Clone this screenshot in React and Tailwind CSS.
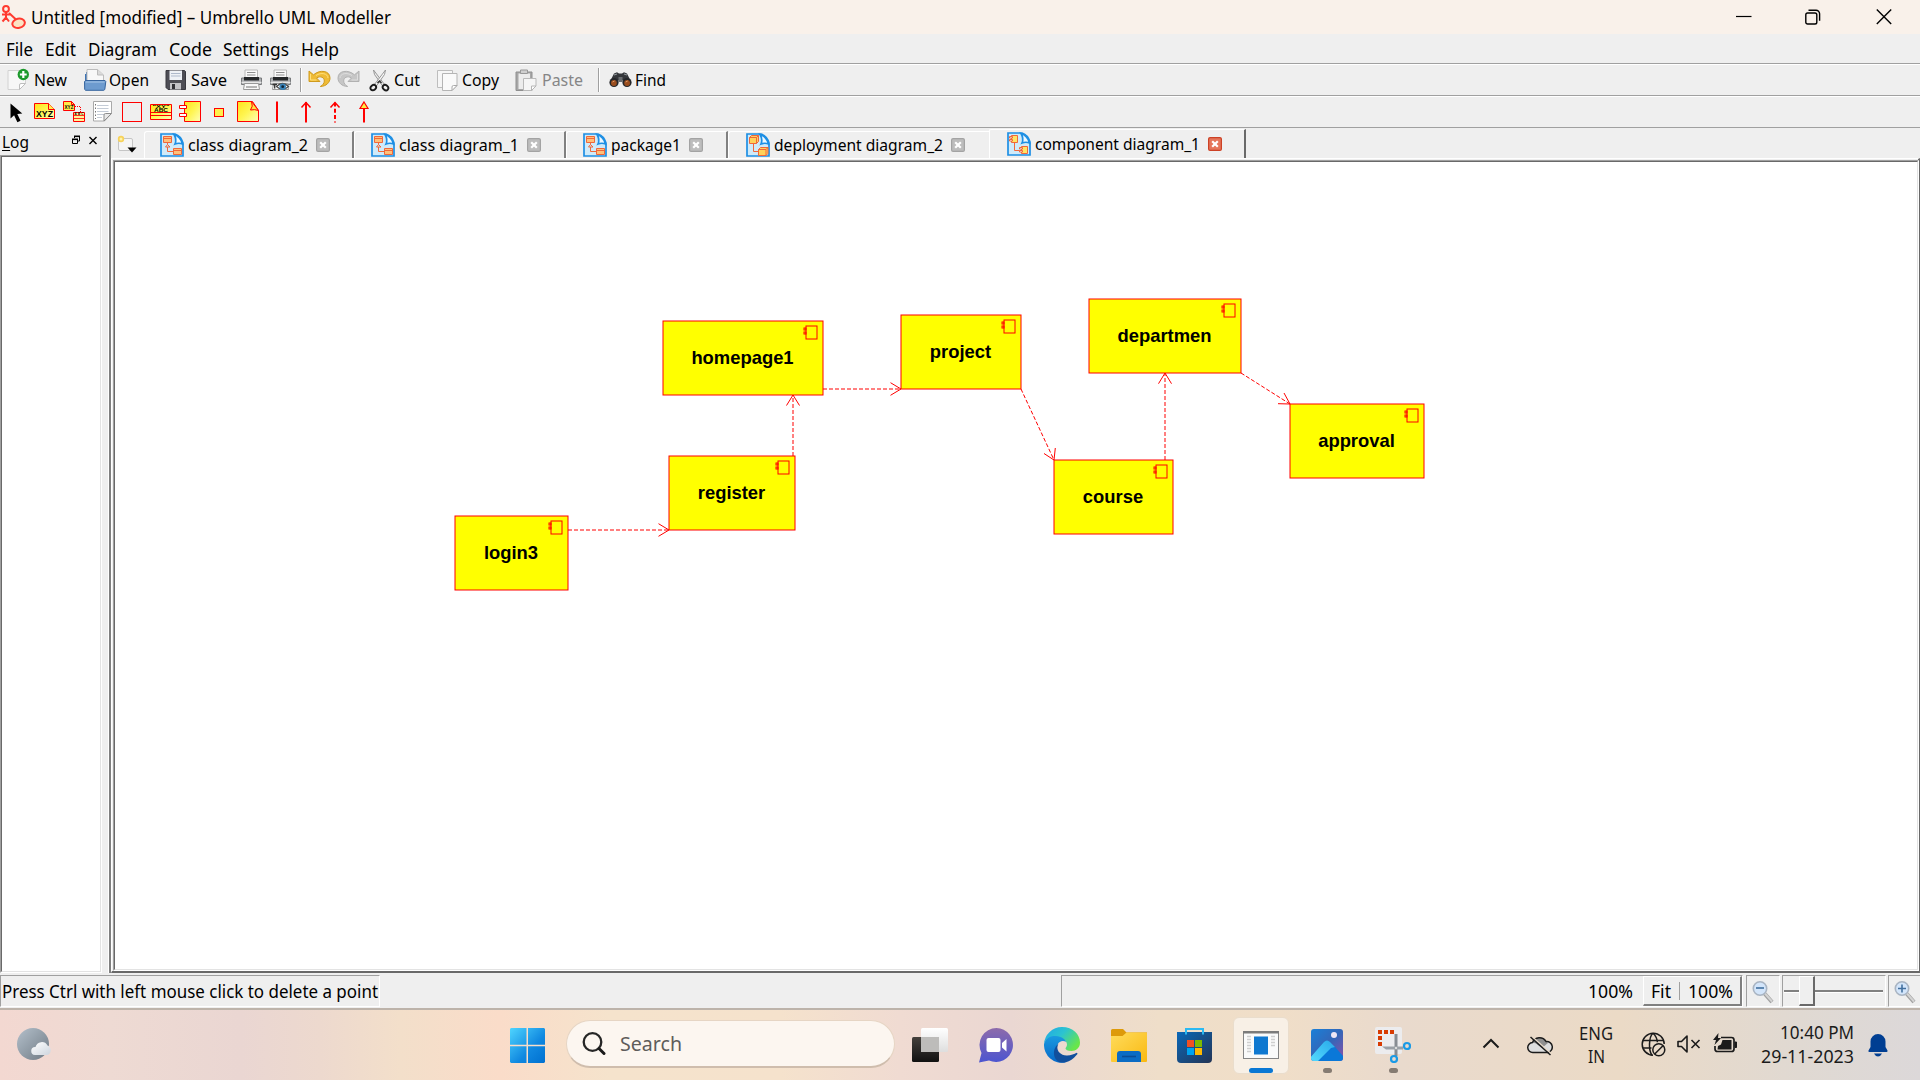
import React, { useLayoutEffect, useRef } from "react";

/* Single-line label whose glyphs are fitted to an exact advance width. */
function Label({ w, className = "", children }) {
  const ref = useRef(null);
  useLayoutEffect(() => {
    const fit = () => {
      const el = ref.current;
      if (!el) return;
      el.style.transform = "none";
      el.style.transform = `scaleX(${w / el.getBoundingClientRect().width})`;
    };
    fit();
    document.fonts?.ready.then(fit);
  }, [w, children]);
  return (
    <span className={"block shrink-0 whitespace-nowrap " + className} style={{ width: w }}>
      <span ref={ref} className="inline-block origin-left">{children}</span>
    </span>
  );
}

function Svg({ w, h, vw = w, vh = h, className = "", children }) {
  return (
    <svg width={w} height={h} viewBox={`0 0 ${vw} ${vh}`} fill="none" className={"block shrink-0 " + className}>
      {children}
    </svg>
  );
}

const AppLogo = () => (
  <Svg w={25} h={25} className="ml-px">
    <g stroke="#ff3b30" strokeWidth="2">
      <circle cx="5" cy="4" r="2.9" fill="#fff2e8" />
      <path d="M5 7v6M1 9.5h9M5 12.500l-3.500 4M5 12.500l3 4M8 8l7 6.500" />
      <ellipse cx="17.6" cy="18.3" rx="6.3" ry="4.6" fill="#fbe3c4" transform="rotate(-12 17.6 18.3)" />
    </g>
  </Svg>
);

function TitleBar() {
  return (
    <header className="flex h-[34px] w-full items-center bg-[#f9f1ea]">
      <AppLogo />
      <Label w={360} className="ml-[5px] text-[18px]">Untitled [modified] – Umbrello UML Modeller</Label>
      <div className="ml-auto mr-7 flex items-center">
        <Svg w={16} h={16}><path d="M0 7.500h15.500" stroke="#000" strokeWidth="1.200" /></Svg>
        <Svg w={16} h={16} className="ml-[53px]">
          <rect x="0.800" y="4" width="11" height="11" rx="1.800" stroke="#000" strokeWidth="1.400" />
          <path d="M3.500 1.200h7.500a3.600 3.600 0 0 1 3.600 3.600v7" stroke="#000" strokeWidth="1.400" />
        </Svg>
        <Svg w={16} h={16} className="ml-[55px]"><path d="M.8 .5l14.400 14.400M15.200 .5L.8 14.900" stroke="#000" strokeWidth="1.400" /></Svg>
      </div>
    </header>
  );
}

function MenuBar() {
  return (
    <nav className="flex h-[30px] w-full items-center border-b border-[#a0a0a0] pl-[6px] text-[18px]">
      <Label w={27}>File</Label>
      <Label w={31} className="ml-3">Edit</Label>
      <Label w={69} className="ml-3">Diagram</Label>
      <Label w={43} className="ml-3">Code</Label>
      <Label w={66} className="ml-[11px]">Settings</Label>
      <Label w={38} className="ml-3">Help</Label>
    </nav>
  );
}

const NewIcon = () => (
  <Svg w={24} h={24}>
    <path d="M1 2.500h17.500v13l-6 6H1z" fill="#f7f7f7" stroke="#d2d2d2" />
    <path d="M18.500 15.500h-4.500q-1.500 0-1.500 1.500v4.500z" fill="#fff" stroke="#bdbdbd" />
    <circle cx="16.300" cy="6.500" r="5.700" fill="#1d9a2c" />
    <path d="M16.300 3.100v6.800M12.900 6.500h6.800" stroke="#fff" strokeWidth="2.200" />
  </Svg>
);
const OpenIcon = () => (
  <Svg w={24} h={24}>
    <path d="M3 7V4h6v3" fill="#4578b4" />
    <path d="M2 6h4v8H2z" fill="#3f73b2" />
    <path d="M4 13V1.500h10.500L20.500 7v6z" fill="#f8f8f8" stroke="#bcbcbc" />
    <path d="M14.500 1.500v5.500h6" fill="#dadada" stroke="#bcbcbc" />
    <path d="M1.500 13.500l1.500-1h19l.8 1-1 8-1 .8H2.500l-.8-.8z" fill="#6d9bcf" stroke="#36659f" />
    <path d="M2.500 14h19" stroke="#a9c7e8" />
  </Svg>
);
const SaveIcon = () => (
  <Svg w={22} h={22}>
    <path d="M1 1.500h18.500l1 1V20.500H3L1 18.500z" fill="#4d4d55" stroke="#38383f" />
    <path d="M4.500 1.500h12.500v9.500H4.500z" fill="#eef1f6" />
    <path d="M6 4.500h9.500M6 7h9.500" stroke="#aeb9cb" />
    <path d="M5 14h11v6.500H5z" fill="#c3c3c8" />
    <path d="M7 15h3v5H7z" fill="#303036" />
  </Svg>
);
const PrintIcon = ({ preview }) => (
  <Svg w={23} h={24}>
    <path d="M5 2h12.500v8H5z" fill="#fafafa" stroke="#b8b8b8" />
    <path d="M7 4.500h8.500M7 7h8.500" stroke="#8e8e8e" />
    <path d="M1.500 10h20v6.500h-20z" fill="#aeb0b3" stroke="#77797b" />
    <path d="M4 9h15v3.500H4z" fill="#26282a" />
    <path d="M1.500 14.500h20" stroke="#e7e7e7" strokeWidth="1.500" />
    <path d="M4.500 15.500h14l1 6h-16z" fill="#f8f8f8" stroke="#999" />
    {preview ? (
      <g>
        <path d="M3.500 16.500h4.500M5.700 16.500v4" stroke="#333" strokeWidth="1.300" />
        <path d="M7.500 18.500q6-6 12 0q-6 5.500-12 0z" fill="#fff" stroke="#4a4a4a" strokeWidth="1.200" />
        <circle cx="13.700" cy="18.700" r="3.300" fill="#3a83b8" />
        <circle cx="13.700" cy="18.700" r="1.400" fill="#123" />
      </g>
    ) : <path d="M6 19h11" stroke="#b5b5b5" strokeWidth="2" />}
  </Svg>
);
const TurnIcon = ({ redo }) => (
  <Svg w={23} h={20} className={redo ? "-scale-x-100" : ""}>
    <path
      d="M1 2v10.500h11L8.500 9c4-2.600 8-.4 7.800 3 0 2.400-1.800 4.300-4 5.500 6-.2 9.700-4 9.700-8.500C22 1.500 12 .2 5.500 5.800z"
      fill={redo ? "#c6c6c6" : "#efbb36"} stroke={redo ? "#b1b1b1" : "#cf9a1c"}
    />
    <path d="M2.500 5v6h6M8 6.500c5-3.500 12-2 12 2.500" stroke={redo ? "#dedede" : "#ffe07a"} />
  </Svg>
);
const CutIcon = () => (
  <Svg w={22} h={23}>
    <path d="M4.500 1l1 4.500 8.500 12 1.800-1.700z" fill="#e9e9e9" stroke="#8f8f8f" strokeWidth=".9" />
    <path d="M16.500 1l-1 4.500-8.500 12-1.800-1.700z" fill="#f7f7f7" stroke="#8f8f8f" strokeWidth=".9" />
    <ellipse cx="4.300" cy="18.600" rx="3" ry="2.400" transform="rotate(-40 4.300 18.600)" stroke="#1c1c1c" strokeWidth="1.900" />
    <ellipse cx="16.500" cy="18.600" rx="3" ry="2.400" transform="rotate(40 16.500 18.600)" stroke="#1c1c1c" strokeWidth="1.900" />
    <path d="M8.500 14l2-2 2 2" stroke="#333" strokeWidth="1.500" />
  </Svg>
);
const CopyIcon = () => (
  <Svg w={21} h={23}>
    <path d="M.5 1.500h15v17H.5z" fill="#f6f6f6" stroke="#bdbdbd" />
    <path d="M5.500 4.500h14.500v12l-5 5H5.500z" fill="#fafafa" stroke="#b5b5b5" />
    <path d="M20 16.500h-3.500q-1.500 0-1.500 1.500v3.500z" fill="#fff" stroke="#aaa" />
  </Svg>
);
const PasteIcon = () => (
  <Svg w={23} h={23}>
    <path d="M1 3h16v18.500H1z" fill="#a7a7a7" stroke="#8f8f8f" />
    <path d="M3.500 4.500h11.500V20H3.500z" fill="#ececec" />
    <path d="M5.500 1h7v3.500h-7z" fill="#cfcfcf" stroke="#999" />
    <path d="M8.500 9.500h12.500v7.500l-4.500 4.500h-8z" fill="#f5f5f5" stroke="#b9b9b9" />
    <path d="M21 17h-4.500v4.500z" fill="#fff" stroke="#b5b5b5" />
  </Svg>
);
const FindIcon = () => (
  <Svg w={23} h={16}>
    <path d="M5 1.500l3-1.200 2 1.200h3l2-1.200 3 1.200 3.500 7H1.500z" fill="#34363a" />
    <path d="M9.500 5h4v5h-4z" fill="#6a6d70" />
    <path d="M5 3l3-1M15 2l3 1" stroke="#90969a" strokeWidth="1.300" />
    <circle cx="5" cy="10.500" r="4.600" fill="#25272a" />
    <circle cx="18" cy="10.500" r="4.600" fill="#25272a" />
    <circle cx="4.900" cy="11" r="2.900" fill="#9a4d1e" />
    <circle cx="18.100" cy="11" r="2.900" fill="#9a4d1e" />
    <path d="M3.500 10l2-1M16.700 10l2-1" stroke="#e09a65" />
  </Svg>
);

const ToolBarLine = () => <i className="block h-6 w-0.5 shrink-0 border-l border-[#a0a0a0] bg-white" />;

function MainBar() {
  return (
    <div className="flex h-8 w-full items-center border-y border-b-[#a0a0a0] border-t-white pl-[7px] text-[16.500px]">
      <NewIcon />
      <Label w={33} className="ml-[3px]">New</Label>
      <div className="ml-4"><OpenIcon /></div>
      <Label w={40} className="ml-[2px]">Open</Label>
      <div className="ml-[16px]"><SaveIcon /></div>
      <Label w={36} className="ml-[4px]">Save</Label>
      <div className="ml-[13px]"><PrintIcon /></div>
      <div className="ml-[6px]"><PrintIcon preview /></div>
      <div className="ml-[8px]"><ToolBarLine /></div>
      <div className="-mt-[3px] ml-[6px]"><TurnIcon /></div>
      <div className="-mt-[3px] ml-[6px]"><TurnIcon redo /></div>
      <div className="ml-[9px]"><CutIcon /></div>
      <Label w={26} className="ml-[3px]">Cut</Label>
      <div className="ml-[17px]"><CopyIcon /></div>
      <Label w={37} className="ml-[4px]">Copy</Label>
      <div className="ml-[16px]"><PasteIcon /></div>
      <Label w={41} className="ml-[4px] text-[#868686]">Paste</Label>
      <div className="ml-[15px]"><ToolBarLine /></div>
      <div className="ml-[9px]"><FindIcon /></div>
      <Label w={31} className="ml-[3px]">Find</Label>
    </div>
  );
}

const RED = "#ff0000";
function YellowFade({ id }) {
  return (
    <linearGradient id={id} x1="0" y1="0" x2="1" y2="1">
      <stop offset="0" stopColor="#ffe21a" />
      <stop offset=".5" stopColor="#fff552" />
      <stop offset="1" stopColor="#ffffb8" />
    </linearGradient>
  );
}

/* Diagram tools: 24px cells placed on a 29px pitch. */
function ToolPalette() {
  return (
    <div className="flex h-8 w-full items-center gap-[5px] border-y border-b-[#a0a0a0] border-t-white pl-1">
      <Svg w={24} h={24}>
        <path d="M6.500 3.500v15l3.600-3.200 3.300 7 3.200-1.500-3.300-6.800 5-.6z" fill="#000" />
      </Svg>
      <Svg w={24} h={24}>
        <defs><YellowFade id="y1" /></defs>
        <path d="M1.500 3.500h14l6 6v9h-20z" fill="url(#y1)" stroke={RED} />
        <path d="M15.500 3.500v6h6" fill="#ffee55" stroke={RED} />
        <text x="3" y="16.500" textLength="17" lengthAdjust="spacingAndGlyphs" className="fill-black font-['Liberation_Sans'] text-[8.500px] font-bold">XYZ</text>
      </Svg>
      <Svg w={24} h={24}>
        <path d="M1.500 1.500h8l3 3v6h-11z" fill="#ffe94a" stroke={RED} />
        <path d="M9.500 1.500v3h3" stroke={RED} />
        <text x="2.500" y="8.500" textLength="9" lengthAdjust="spacingAndGlyphs" className="fill-black font-['Liberation_Sans'] text-[4.500px] font-bold">XYZ</text>
        <path d="M13 6.500h5.500V12" stroke={RED} strokeDasharray="1 1" />
        <path d="M11.500 12.500h11v9h-11z" fill="#fff39a" stroke={RED} />
        <path d="M11.500 15.500h11M11.500 18.500h11" stroke={RED} strokeWidth=".8" />
        <text x="12.500" y="15" textLength="9" className="fill-black font-['Liberation_Sans'] text-[3px] font-bold">ABC</text>
      </Svg>
      <Svg w={24} h={24}>
        <path d="M2.500 1.500h18v12l-7 7.500h-11z" fill="#fff" stroke="#a9a9a9" />
        <path d="M6 5.500h11.500M6 8.500h11.500M6 11.500h11.500M6 14.500h7M6 17.500h5" stroke="#c3cbd6" />
        <path d="M4.500 4v15" stroke="#777" strokeDasharray="1.500 2" />
        <path d="M20.500 13.500h-6q-1.500 0-1.500 1.500v6z" fill="#e9e9e9" stroke="#8d8d8d" />
      </Svg>
      <Svg w={24} h={24}><rect x="2.500" y="2.500" width="19" height="19" stroke={RED} /></Svg>
      <Svg w={24} h={24}>
        <defs><YellowFade id="y2" /></defs>
        <path d="M1.500 4.500h21v15h-21z" fill="url(#y2)" stroke={RED} />
        <path d="M1.500 12.500h21M1.500 15.500h21" stroke={RED} />
        <text x="3.500" y="7.700" textLength="17" lengthAdjust="spacingAndGlyphs" className="fill-black font-['Liberation_Sans'] text-[3.500px] font-bold">"XY"</text>
        <text x="5" y="11.500" textLength="14" lengthAdjust="spacingAndGlyphs" className="fill-black font-['Liberation_Sans'] text-[5.500px] font-bold">ABC</text>
      </Svg>
      <Svg w={24} h={24}>
        <defs><YellowFade id="y3" /></defs>
        <path d="M6.500 1.500h16v20h-16z" fill="url(#y3)" stroke={RED} />
        <path d="M1.500 5.500h7v3h-7zM1.500 13.500h7v3h-7z" fill="#fff" stroke={RED} />
      </Svg>
      <Svg w={24} h={24}><rect x="7.500" y="8.500" width="9" height="8" fill="#fff04c" stroke={RED} /></Svg>
      <Svg w={24} h={24}>
        <defs><YellowFade id="y4" /></defs>
        <path d="M1.500 1.500h15l6 9v11h-21z" fill="url(#y4)" stroke={RED} />
        <path d="M15.500 1.500q2 5-1 8.500 4-1 8 .5z" fill="#ffe640" stroke={RED} />
      </Svg>
      <Svg w={24} h={24}><path d="M12 1.500v21" stroke={RED} strokeWidth="2" /></Svg>
      <Svg w={24} h={24}><path d="M12 2v20.500" stroke={RED} strokeWidth="2" /><path d="M7.500 7.500L12 2.500l4.500 5" stroke={RED} strokeWidth="1.500" /></Svg>
      <Svg w={24} h={24}>
        <path d="M12 2.500v20" stroke={RED} strokeWidth="2" strokeDasharray="4 2.300" />
        <path d="M7.500 7.500L12 2.500l4.500 5" stroke={RED} strokeWidth="1.500" />
      </Svg>
      <Svg w={24} h={24}>
        <path d="M12 8.500v14" stroke={RED} strokeWidth="2" />
        <path d="M12 2l4 6.500H8z" fill="#ffee44" stroke={RED} strokeWidth="1.200" />
      </Svg>
    </div>
  );
}

function LogPanel() {
  return (
    <aside className="flex w-[102px] shrink-0 flex-col">
      <div className="flex h-[27px] items-center pl-[2px] pt-px text-[16.500px]">
        <Label w={27}><span className="underline decoration-1 underline-offset-2">L</span>og</Label>
        <Svg w={10} h={10} className="-mt-1 ml-[42px]">
          <path d="M3.500 3V1.500h5v4.500H7" stroke="#000" /><path d="M3 1.300h6" stroke="#000" strokeWidth="1.600" />
          <path d="M1.500 4.500h5v4h-5z" stroke="#000" /><path d="M1 4.300h6" stroke="#000" strokeWidth="1.600" />
        </Svg>
        <Svg w={9} h={9} className="-mt-1 ml-2"><path d="M.5 1l7 7M7.500 1l-7 7" stroke="#000" strokeWidth="1.400" /></Svg>
      </div>
      <div className="flex flex-1 border border-b-white border-l-[#a0a0a0] border-r-white border-t-[#a0a0a0]">
        <div className="flex-1 border border-b-[#e3e3e3] border-l-[#696969] border-r-[#e3e3e3] border-t-[#696969] bg-white" />
      </div>
    </aside>
  );
}

/* Blue document page with one of three diagram miniatures on it. */
function DiagramIcon({ kind }) {
  const cell = {
    class: (
      <g fill="#ffc07a" stroke="#f0673a">
        <path d="M3.500 3.500h8v6h-8zM13.500 15.500h8v6h-8z" />
        <path d="M3.500 5.500h8M13.500 17.500h8M7.500 9.500v2l-2 2.500h4.500l-2.500-2.500M7.500 14v4.500h6" fill="none" />
      </g>
    ),
    deployment: (
      <g fill="#ffd25a" stroke="#f0673a">
        <path d="M3.500 4.500l2-2h7v6l-2 2h-7zM12.500 16.500l2-2h7.500v6l-2 2h-7.500z" />
        <path d="M3.500 4.500h7v6M10.500 4.500l2-2M12.500 16.500h7.500v6M20 16.500l2-2M7.500 10.500v8h5" fill="none" />
      </g>
    ),
    component: (
      <g fill="#ffe466" stroke="#f0673a">
        <path d="M4.500 3.500h6v7h-6zM14.500 14.500h6v7h-6z" />
        <path d="M2.500 4.500h3v1.500h-3zM2.500 7.500h3V9h-3zM12.500 15.500h3V17h-3zM12.500 18.500h3V20h-3z" fill="#fff" />
        <path d="M7.500 10.500v8h5" fill="none" />
      </g>
    ),
  }[kind];
  return (
    <Svg w={24} h={24}>
      <path d="M1 1h14q6 2 8 9v13H1z" fill="#cfeaf9" stroke="#1e8fe4" strokeWidth="1.700" />
      <path d="M14 1.500q3 5 1 9.500 4-1.500 7.500 0Q20.500 3.500 14 1.500z" fill="#eef9ff" stroke="#1e8fe4" strokeWidth="1.700" />
      {cell}
    </Svg>
  );
}

function CloseBox({ active }) {
  return (
    <Svg w={14} h={14}>
      <rect x=".6" y=".6" width="12.800" height="12.800" rx="1.500" fill={active ? "#e5755a" : "#bdbdbd"} stroke={active ? "#cc4125" : "#a3a3a3"} strokeWidth="1.200" />
      <path d="M4.200 4.200l5.600 5.600M9.800 4.200L4.200 9.800" stroke="#fff" strokeWidth="2.200" />
    </Svg>
  );
}

const tabs = [
  { name: "class diagram_2", kind: "class", w: 120, tab: "w-[210px] pl-[15px]" },
  { name: "class diagram_1", kind: "class", w: 120, tab: "w-[212px] pl-[16px]" },
  { name: "package1", kind: "class", w: 70, tab: "w-[162px] pl-[16px]" },
  { name: "deployment diagram_2", kind: "deployment", w: 169, tab: "w-[261px] pl-[17px]" },
  { name: "component diagram_1", kind: "component", w: 165, tab: "w-[257px] pl-[17px]" },
];

function TabBar() {
  return (
    <div className="flex h-[30px] items-end pl-[6px] text-[16.500px]">
      <Svg w={20} h={18} className="mb-[5px]">
        <rect x="1.500" y="3.500" width="14" height="12" rx="1.500" fill="#f5f5f5" stroke="#c5c5c5" />
        <circle cx="4" cy="4" r="3.200" fill="#f7d25a" />
        <circle cx="4" cy="4" r="1.500" fill="#fff3a8" />
        <path d="M10.500 12.500h9l-4.500 5z" fill="#000" />
      </Svg>
      <div className="ml-[7px] flex items-end">
        {tabs.map((t, i) => {
          const active = i === 4;
          return (
            <div
              key={t.name}
              className={
                "flex shrink-0 items-center border-l border-t border-white " + t.tab + " " +
                (active ? "h-[29px] rounded-tl-[2px] border-r-2 border-r-[#696969]" : "h-[27px] rounded-tl-[3px] " + (i < 3 ? "border-r-2 border-r-[#808080]" : ""))
              }
            >
              <DiagramIcon kind={t.kind} />
              <Label w={t.w} className="ml-1">{t.name}</Label>
              <div className="ml-[8px]"><CloseBox active={active} /></div>
            </div>
          );
        })}
      </div>
    </div>
  );
}

const boxes = [
  { name: "login3", x: 455, y: 516, w: 113 },
  { name: "register", x: 669, y: 456, w: 126 },
  { name: "homepage1", x: 663, y: 321, w: 160 },
  { name: "project", x: 901, y: 315, w: 120 },
  { name: "departmen", x: 1089, y: 299, w: 152 },
  { name: "course", x: 1054, y: 460, w: 119 },
  { name: "approval", x: 1290, y: 404, w: 134 },
];

const links = [
  { line: "M568 530H669", head: "M658.500 523.700L669 530L658.500 536.300" },
  { line: "M793 456V395", head: "M786.500 405.500L793 395L799.500 405.500" },
  { line: "M823 389H901", head: "M890.500 382.700L901 389L890.500 395.300" },
  { line: "M1021 389L1054 460", head: "M1044 453.500L1054 460L1055.300 448" },
  { line: "M1165 460V373", head: "M1158.500 383.700L1165 373L1171.500 383.700" },
  { line: "M1241 373L1290 404", head: "M1284 393L1290 404L1278 403.700" },
];

/* Diagram scene; its view box starts at the canvas's own window offset. */
function Diagram() {
  return (
    <svg width="1802" height="807" viewBox="115 162 1802 807" className="block">
      {boxes.map((b) => (
        <g key={b.name} stroke={RED}>
          <rect x={b.x} y={b.y} width={b.w} height="74" fill="#ffff00" />
          <rect x={b.x + b.w - 17} y={b.y + 5} width="11" height="13" fill="none" />
          <rect x={b.x + b.w - 19} y={b.y + 7} width="2" height="2" fill="none" />
          <rect x={b.x + b.w - 19} y={b.y + 11} width="2" height="2" fill="none" />
          <text x={b.x + b.w / 2 - 0.5} y={b.y + 43} textAnchor="middle" stroke="none" className="fill-black font-['Liberation_Sans',Arial,sans-serif] text-[18.400px] font-bold">
            {b.name}
          </text>
        </g>
      ))}
      {links.map((l) => (
        <g key={l.line} stroke={RED} fill="none">
          <path d={l.line} strokeDasharray="4 2" />
          <path d={l.head} />
        </g>
      ))}
    </svg>
  );
}

function Workspace() {
  return (
    <main className="ml-[6px] flex w-[1812px] shrink-0 flex-col border-l border-white">
      <div className="flex flex-1 flex-col border-l-2 border-[#808080]">
        <TabBar />
        <div className="flex flex-1 border-b-2 border-l border-r-2 border-t border-b-[#696969] border-l-white border-r-[#696969] border-t-white pl-px pt-px">
          <div className="flex-1 border border-b-[#fff] border-l-[#a0a0a0] border-r-white border-t-[#a0a0a0]">
            <div className="h-full overflow-hidden border border-b-[#e3e3e3] border-l-[#696969] border-r-[#e3e3e3] border-t-[#696969] bg-white">
              <Diagram />
            </div>
          </div>
        </div>
      </div>
    </main>
  );
}

const Magnifier = ({ plus }) => (
  <Svg w={22} h={24}>
    <path d="M12.500 13.500l7.500 8.500" stroke="#a0a0a0" strokeWidth="4" />
    <path d="M12.500 13l7.500 8.500" stroke="#d4d4d4" strokeWidth="2" />
    <circle cx="8" cy="8.500" r="6.700" fill="#d3e5fa" stroke="#a9b4c2" strokeWidth="1.600" />
    <path d={plus ? "M4 8.500h8M8 4.500v8" : "M4 8h8"} stroke="#42709f" strokeWidth="1.600" />
  </Svg>
);

const sunken = "border border-b-white border-l-[#a0a0a0] border-r-white border-t-[#a0a0a0]";

function StatusBar() {
  return (
    <footer className="flex h-[35px] w-full items-start pt-[2px] text-[18px]">
      <div className={"flex h-8 w-[380px] items-center pl-px " + sunken}>
        <Label w={376}>Press Ctrl with left mouse click to delete a point</Label>
      </div>
      <div className={"ml-auto flex h-8 w-[682px] items-center justify-end " + sunken}>
        <Label w={45}>100%</Label>
        <div className="ml-[10px] flex h-[30px] w-[99px] items-center border border-b-2 border-r-2 border-b-[#808080] border-l-white border-r-[#808080] border-t-white pl-[7px]">
          <Label w={20}>Fit</Label>
          <i className="ml-[8px] block h-[18px] w-px bg-[#a0a0a0]" />
          <Label w={45} className="ml-[8px]">100%</Label>
        </div>
      </div>
      <div className={"ml-[3px] flex h-8 w-[34px] items-center pl-[5px] pt-px " + sunken}><Magnifier /></div>
      <div className={"ml-[2px] flex h-8 w-[104px] items-center pl-px " + sunken}>
        <i className="block h-[3px] w-[15px] border-b border-t-2 border-b-white border-t-[#808080]" />
        <i className="block h-[30px] w-4 border border-b-2 border-r-2 border-b-[#696969] border-l-white border-r-[#696969] border-t-white" />
        <i className="block h-[3px] w-[68px] border-b border-t-2 border-b-white border-t-[#808080]" />
      </div>
      <div className="ml-[2px] flex h-8 w-[32px] items-center border-y border-l border-b-white border-l-[#a0a0a0] border-t-[#a0a0a0] pl-[5px] pt-px"><Magnifier plus /></div>
    </footer>
  );
}

const Weather = () => (
  <Svg w={36} h={34}>
    <defs>
      <linearGradient id="moon" x1="0" y1="0" x2="1" y2="1"><stop stopColor="#b4c0cb" /><stop offset="1" stopColor="#6f7a84" /></linearGradient>
      <linearGradient id="cld" x1="0" y1="0" x2="1" y2="1"><stop stopColor="#fff" /><stop offset="1" stopColor="#cdd5de" /></linearGradient>
    </defs>
    <circle cx="16" cy="17" r="16" fill="url(#moon)" />
    <path d="M18 28a4 4 0 0 1 .5-8 6.500 6.500 0 0 1 12-1.500A5 5 0 0 1 30 28z" fill="url(#cld)" />
  </Svg>
);

const StartIcon = () => (
  <Svg w={35} h={35}>
    <defs><linearGradient id="win" x1="0" y1="0" x2="35" y2="35" gradientUnits="userSpaceOnUse"><stop stopColor="#4fd5ff" /><stop offset=".6" stopColor="#1088e0" /><stop offset="1" stopColor="#0070d0" /></linearGradient></defs>
    <path d="M1 0h15.500v16.800H0V1zM18 0h16l1 1v15.800H18zM0 18.200h16.500V35H1l-1-1zM18 18.200h17V34l-1 1H18z" fill="url(#win)" />
  </Svg>
);
const TaskViewIcon = () => (
  <Svg w={36} h={34}>
    <defs>
      <linearGradient id="tv" x1="0" y1="0" x2="0" y2="1"><stop stopColor="#44403c" /><stop offset="1" stopColor="#111" /></linearGradient>
      <linearGradient id="tw" x1="0" y1="0" x2="0" y2="1"><stop stopColor="#fff" /><stop offset="1" stopColor="#dedede" /></linearGradient>
    </defs>
    <rect x="0" y="9" width="27" height="25" rx="1.500" fill="url(#tv)" />
    <rect x="9" y="0" width="27" height="24" rx="1.500" fill="url(#tw)" />
    <rect x="9" y="9" width="18" height="15" fill="#bdbcba" />
  </Svg>
);
const ChatIcon = () => (
  <Svg w={35} h={35}>
    <defs><linearGradient id="chat" x1="0" y1="0" x2="0" y2="1"><stop stopColor="#8d6bab" /><stop offset="1" stopColor="#4c55d0" /></linearGradient></defs>
    <path d="M17.500 0A17 17 0 1 1 10 32.500L0 34.500 2.500 25A17 17 0 0 1 17.500 0z" fill="url(#chat)" />
    <rect x="7.500" y="10" width="14" height="14" rx="2" fill="#fff" />
    <path d="M23 15l4.500-4v12.500L23 19.500z" fill="#fff" />
  </Svg>
);
const EdgeIcon = () => (
  <Svg w={36} h={36}>
    <defs>
      <linearGradient id="e1" x1="0" y1="0" x2="1" y2=".6"><stop stopColor="#1fa6e8" /><stop offset=".5" stopColor="#2cc3d0" /><stop offset="1" stopColor="#68e64a" /></linearGradient>
      <linearGradient id="e2" x1="0" y1="0" x2="0" y2="1"><stop stopColor="#1a9ae0" /><stop offset="1" stopColor="#0668c8" /></linearGradient>
    </defs>
    <path d="M0 17A18 18 0 0 1 18 0c11 0 18 7.500 18 15.500 0 5.500-4 8.500-8.500 8.500-4 0-6-1.500-6-2.500s1.500-1.500 1.500-4c0-3-3-5.500-7.500-7C9 8.500 2 11 0 17z" fill="url(#e1)" />
    <path d="M0 17C1.500 11 7 8.500 12 9c5 .5 9.500 3 10 6-2-1.500-7-1.500-8.500 3-2 6 1.500 12 6 14l2 3.500A18 18 0 0 1 0 17z" fill="url(#e2)" />
    <path d="M14.500 16.500c-3 5 0 11.500 8 12 4 .2 8-1.500 10-2.800l1.200 1-3.700 4c-4 4-9 5.500-14 4.500-6-2-8-10-4-16z" fill="#114f9c" />
  </Svg>
);
const FolderIcon = () => (
  <Svg w={36} h={33}>
    <defs><linearGradient id="fd" x1="0" y1="0" x2="1" y2="1"><stop stopColor="#ffdc5c" /><stop offset="1" stopColor="#f9b912" /></linearGradient></defs>
    <path d="M0 1.500Q0 0 1.500 0H12l3.500 3.500H36V12H0z" fill="#dd9a0a" />
    <path d="M0 7h11.500l4-3.500H35q1 0 1 1V32q0 1-1 1H1q-1 0-1-1z" fill="url(#fd)" />
    <path d="M6 33v-8q0-3 3-3h18q3 0 3 3v8z" fill="#0b6cc4" />
    <path d="M11 27.500h14" stroke="#0a4d96" strokeWidth="1.600" />
  </Svg>
);
const StoreIcon = () => (
  <Svg w={35} h={35}>
    <defs><linearGradient id="st" x1="0" y1="0" x2="1" y2="1"><stop stopColor="#0a68b8" /><stop offset="1" stopColor="#243454" /></linearGradient></defs>
    <path d="M0 4h35v27q0 4-4 4H4q-4 0-4-4z" fill="url(#st)" />
    <path d="M9 6.500V1h17v5.500" stroke="#2bb9f2" strokeWidth="2" />
    <path d="M10 12h7v7h-7z" fill="#f25022" /><path d="M18 12h7v7h-7z" fill="#7fba00" />
    <path d="M10 20h7v7h-7z" fill="#00a4ef" /><path d="M18 20h7v7h-7z" fill="#ffb900" />
  </Svg>
);
const WindowIcon = () => (
  <Svg w={36} h={28}>
    <rect x=".5" y=".5" width="35" height="27" fill="#fafafa" stroke="#858585" />
    <path d="M0 0h36v2.500H0z" fill="#7b7b7b" />
    <path d="M4 5.500h4M4 8.500h4M4 11.500h4M4 14.500h4M4 17.500h4M4 20.500h4M28 5.500h4M28 8.500h4M28 11.500h4M28 14.500h4" stroke="#cfcfcf" strokeWidth="1.600" />
    <rect x="11" y="5.500" width="14" height="18" fill="#0f78d0" />
  </Svg>
);
const PhotosIcon = () => (
  <Svg w={32} h={32}>
    <defs>
      <linearGradient id="ph" x1="0" y1="0" x2="1" y2="1"><stop stopColor="#1a80d8" /><stop offset=".5" stopColor="#3366b8" /><stop offset="1" stopColor="#8e4fa8" /></linearGradient>
      <linearGradient id="pm" x1="0" y1="1" x2="1" y2="0"><stop stopColor="#55dcff" /><stop offset="1" stopColor="#28a8ea" /></linearGradient>
      <clipPath id="pc"><rect width="32" height="32" rx="3" /></clipPath>
    </defs>
    <g clipPath="url(#pc)">
      <rect width="32" height="32" fill="url(#ph)" />
      <path d="M4 32L20 17q2-1 4 1l8 9v5z" fill="#0a78d8" />
      <path d="M-1 29L13 13q3-3 6 0l5 5-4 1L6 33H0z" fill="url(#pm)" />
    </g>
    <circle cx="23" cy="6" r="3" fill="#eee6f5" />
  </Svg>
);
const SnipIcon = () => (
  <Svg w={36} h={36}>
    <rect width="27" height="27" rx="2" fill="#ececee" />
    <path d="M3 3h4v4H3zM9 3h4v4H9zM15 3h4v4h-4zM3 9h4v4H3zM3 15h4v4H3z" fill="#d83b01" />
    <path d="M19.500 7h3v22h-3z" fill="#878c92" /><path d="M7 19.500h21v3H11z" fill="#9aa0a6" />
    <circle cx="21" cy="21" r="1.200" fill="#ddd" />
    <circle cx="32" cy="19" r="3" stroke="#1a9ae6" strokeWidth="2.200" />
    <circle cx="19" cy="32" r="3" stroke="#1a9ae6" strokeWidth="2.200" />
  </Svg>
);

const taskItems = [
  { id: "view", icon: <TaskViewIcon /> },
  { id: "chat", icon: <ChatIcon /> },
  { id: "edge", icon: <EdgeIcon /> },
  { id: "files", icon: <FolderIcon /> },
  { id: "store", icon: <StoreIcon /> },
  { id: "window", icon: <WindowIcon />, active: true },
  { id: "photos", icon: <PhotosIcon />, open: true },
  { id: "snip", icon: <SnipIcon />, open: true },
];

function TaskBar() {
  return (
    <div className="flex h-[72px] w-full items-center border-t-2 border-[#bdb3aa] bg-[linear-gradient(90deg,#f3d8d1_0px,#eedad3_110px,#ead6d2_240px,#edd9ce_320px,#f3dfca_400px,#fadcc9_500px,#f5e3cc_610px,#f5e2cc_780px,#f0dbd2_900px,#ead7d2_1010px,#efdec9_1160px,#f0dec8_1280px,#e9dacd_1400px,#ebdac6_1620px,#e0d9d2_1800px,#dcd8d9_1920px)]">
      <div className="-mt-[2px] ml-[17px] w-[493px]"><Weather /></div>
      <StartIcon />
      <div className="-mt-[3px] ml-[21px] flex h-[48px] w-[329px] shrink-0 items-center rounded-full border border-b-2 border-[#e6d5c4] border-b-[#cfbdad] bg-[#fcf6f0] pl-[15px] pt-px text-[20px] text-[#5e5c5a]">
        <Svg w={24} h={24}>
          <circle cx="10.500" cy="10" r="8.800" stroke="#262626" strokeWidth="2.300" />
          <path d="M17 16.500l5 5" stroke="#1a1a1a" strokeWidth="3" strokeLinecap="round" />
        </Svg>
        <Label w={62} className="ml-[14px] pt-px">Search</Label>
      </div>
      <div className="ml-[7px] flex items-center gap-[10.200px]">
        {taskItems.map((t) => (
          <div
            key={t.id}
            className={"flex h-[57px] w-14 flex-col items-center rounded-md " + (t.active ? "border border-[#eaddcc] bg-[#f8f0e6]" : "border border-transparent")}
          >
            <div className="flex h-[51px] items-center pt-[5px]">{t.icon}</div>
            <i className={"block h-[5px] shrink-0 rounded-full " + (t.active ? "w-6 bg-[#0a78d4]" : t.open ? "w-[9px] bg-[#857b72]" : "w-0")} />
          </div>
        ))}
      </div>
      <div className="ml-auto flex items-center text-[#1b1b1b]">
        <Svg w={18} h={11} className="-mt-1"><path d="M1.500 9.500L9 2l7.500 7.500" stroke="currentColor" strokeWidth="2" /></Svg>
        <Svg w={26} h={22} className="ml-[27px]">
          <path d="M6 18.500a5 5 0 0 1-.5-10A7.500 7.500 0 0 1 19 7.500a5.500 5.500 0 0 1 1.500 11z" fill="#dedede" />
          <path d="M5.500 8.500A7.500 7.500 0 0 1 19 7.500L21 9l-6 5L9 9.500z" fill="#909090" />
          <path d="M6 18.500a5 5 0 0 1-.5-10A7.500 7.500 0 0 1 19 7.500a5.500 5.500 0 0 1 1.500 11z" stroke="#1b1b1b" strokeWidth="1.500" />
          <path d="M5 2.500l19 17" stroke="#e9dac8" strokeWidth="1.400" />
          <path d="M3.500 3l20 18" stroke="#1b1b1b" strokeWidth="1.500" />
        </Svg>
        <div className="ml-[26px] flex w-[34px] flex-col items-center text-[18px] leading-[23px]">
          <Label w={34}>ENG</Label>
          <Label w={17}>IN</Label>
        </div>
        <Svg w={25} h={25} className="-mt-0.5 ml-[28px]">
          <g stroke="currentColor" strokeWidth="1.500">
            <path d="M12 23.200A11 11 0 1 1 23.200 12" />
            <path d="M12 1.200C7.500 5 7.500 19 11 23M12 1.200c3 2.800 4.200 6 4.400 9M2 8.500h20.500M2 16h8.500" />
            <circle cx="17.800" cy="17.800" r="6" />
            <path d="M13.700 22l8.300-8.300" />
          </g>
        </Svg>
        <Svg w={24} h={20} className="-mt-0.5 ml-[11px]">
          <path d="M1 7.500h3.500L10 2v16l-5.500-5.500H1z" stroke="currentColor" strokeWidth="1.600" strokeLinejoin="round" />
          <path d="M14.500 6l8 8M22.500 6l-8 8" stroke="currentColor" strokeWidth="1.600" />
        </Svg>
        <Svg w={26} h={21} className="-mt-1 ml-[11px]">
          <path d="M9 4.500h10.500q2.500 0 2.500 2.500v9q0 2.500-2.500 2.500h-14Q3 18.500 3 16v-3" stroke="currentColor" strokeWidth="1.700" />
          <path d="M10.500 7h9v9.500H5.500L6 13l3-1.500z" fill="currentColor" />
          <path d="M23 9h1.500v5.500H23z" fill="currentColor" stroke="currentColor" />
          <path d="M6.500 0L1 7h3l-1.500 5L9 5H6z" fill="currentColor" />
        </Svg>
        <div className="-mt-0.5 ml-[23px] flex w-[93px] flex-col items-end text-[18px] leading-[24px]">
          <Label w={74}>10:40 PM</Label>
          <Label w={93}>29-11-2023</Label>
        </div>
        <Svg w={20} h={24} className="ml-[14px] mr-[32px]">
          <path d="M10 1a7.500 7.500 0 0 1 7.500 7.500V14l2 3.500q.3 1.500-1 1.500H1.500Q0 19 .5 17.500l2-3.500V8.500A7.500 7.500 0 0 1 10 1z" fill="#003e92" />
          <path d="M6 20.500h8q-1.500 3-4 3t-4-3z" fill="#003e92" />
        </Svg>
      </div>
    </div>
  );
}

export default function App() {
  return (
    <div className="flex h-[1080px] w-[1920px] flex-col overflow-hidden bg-[#efefef] font-['Noto_Sans',sans-serif] leading-none text-black">
      <TitleBar />
      <MenuBar />
      <MainBar />
      <ToolPalette />
      <div className="flex h-[845px] w-full">
        <LogPanel />
        <Workspace />
      </div>
      <StatusBar />
      <TaskBar />
    </div>
  );
}
